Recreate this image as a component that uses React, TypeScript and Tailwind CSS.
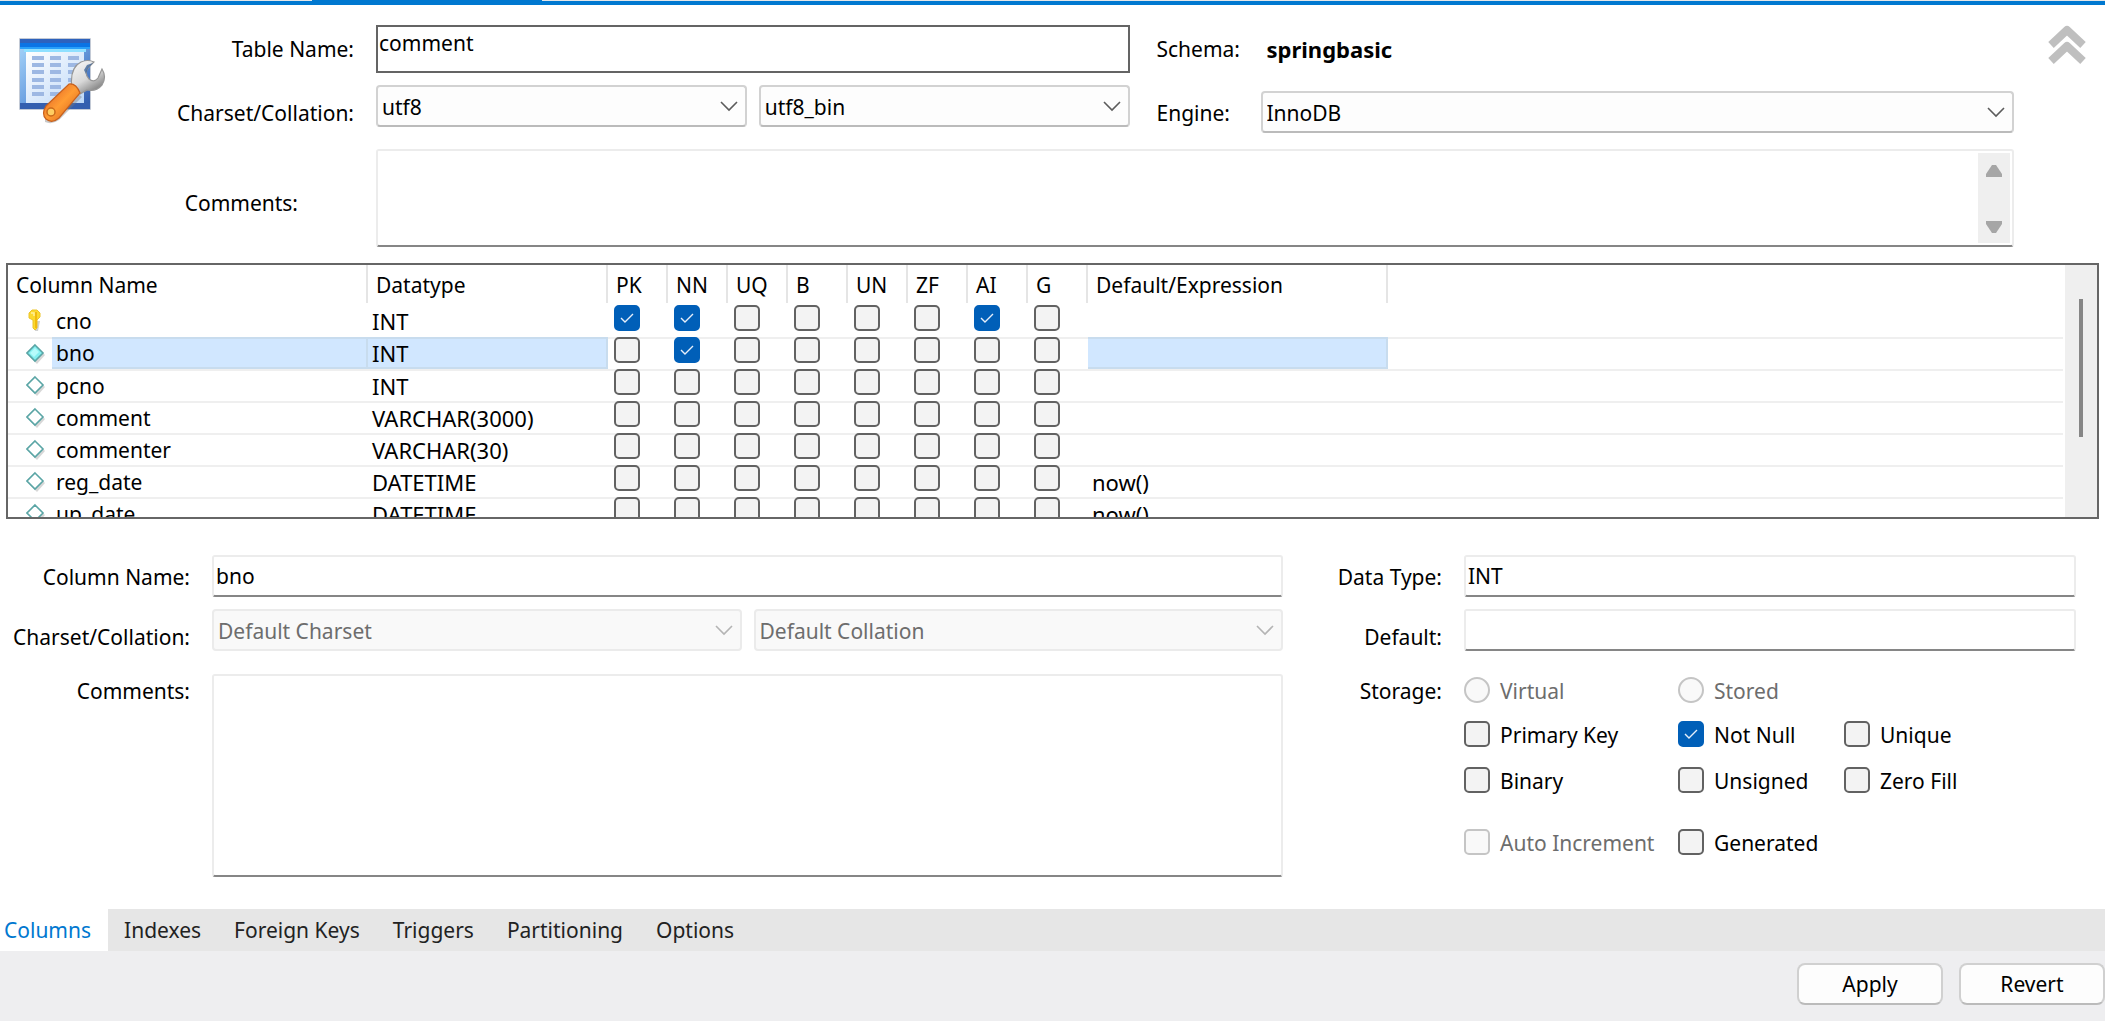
import React, { useId, useState } from 'react';
import clsx from 'clsx';

type Flag = 'PK' | 'NN' | 'UQ' | 'B' | 'UN' | 'ZF' | 'AI' | 'G';

interface Column {
  name: string;
  type: string;
  flags: Flag[];
  defaultValue?: string;
}

const FLAGS: Flag[] = ['PK', 'NN', 'UQ', 'B', 'UN', 'ZF', 'AI', 'G'];

const INITIAL_COLUMNS: Column[] = [
  { name: 'cno', type: 'INT', flags: ['PK', 'NN', 'AI'] },
  { name: 'bno', type: 'INT', flags: ['NN'] },
  { name: 'pcno', type: 'INT', flags: [] },
  { name: 'comment', type: 'VARCHAR(3000)', flags: [] },
  { name: 'commenter', type: 'VARCHAR(30)', flags: [] },
  { name: 'reg_date', type: 'DATETIME', flags: [], defaultValue: 'now()' },
  { name: 'up_date', type: 'DATETIME', flags: [], defaultValue: 'now()' },
];

const TABS = ['Columns', 'Indexes', 'Foreign Keys', 'Triggers', 'Partitioning', 'Options'];

const FIELD =
  'w-full min-w-0 rounded-[3px] border-2 border-[#ececec] border-b-[#868686] bg-white px-0.5 outline-none';

const TableIcon = () => (
  <svg width="88" height="88" viewBox="0 0 88 88" aria-hidden="true">
    <defs>
      <linearGradient id="frame" x1="0" y1="0" x2="1" y2="1">
        <stop offset="0" stopColor="#a9d7fb" />
        <stop offset="0.5" stopColor="#6a9fe0" />
        <stop offset="1" stopColor="#2a55a8" />
      </linearGradient>
      <linearGradient id="sheet" x1="0" y1="0" x2="1" y2="1">
        <stop offset="0" stopColor="#ffffff" />
        <stop offset="1" stopColor="#bcd8f8" />
      </linearGradient>
      <linearGradient id="steel" x1="0" y1="0" x2="0.6" y2="1">
        <stop offset="0" stopColor="#fafafa" />
        <stop offset="0.6" stopColor="#d8d8d8" />
        <stop offset="1" stopColor="#808080" />
      </linearGradient>
      <linearGradient id="handle" x1="0" y1="0" x2="1" y2="1">
        <stop offset="0.2" stopColor="#e8702a" />
        <stop offset="0.5" stopColor="#ff9c33" />
        <stop offset="0.9" stopColor="#d9651c" />
      </linearGradient>
    </defs>
    <rect x="1" y="1" width="72" height="72" rx="1" fill="#c3cad6" />
    <rect x="2" y="2" width="70" height="70" fill="url(#frame)" />
    <rect x="2" y="2" width="70" height="4" fill="#2d62bd" />
    <rect x="2" y="6" width="70" height="5" fill="#0b74e5" />
    <rect x="2" y="10" width="70" height="2" fill="#28a0fa" />
    <rect x="6" y="12" width="62" height="3" fill="#8fe0ff" />
    <rect x="2" y="66" width="70" height="6" fill="#345faf" />
    <rect x="8" y="15" width="58" height="51" fill="url(#sheet)" />
    {[19, 26, 33, 41, 48, 55].map((y) => (
      <g key={y} fill="#9db8e3">
        <rect x="14" y={y} width="12" height="4" />
        <rect x="32" y={y} width="11" height="4" />
        <rect x="50" y={y} width="11" height="4" />
      </g>
    ))}
    <path
      d="M27 80 52 50 64 60 41 83Q34 88 27 85Z"
      fill="#777777"
      opacity="0.4"
    />
    <path
      d="M54 52Q51 31 63 25Q70 22 76 25L70 31Q66 37 71 42Q76 46 80 41L84 32Q89 40 84 48Q78 55 69 53L62 57Z"
      fill="url(#steel)"
      stroke="#969696"
      strokeWidth="1.2"
    />
    <path d="M68 37 70 31 75 26 69 28 66 33Z" fill="#3e6598" opacity="0.8" />
    <path
      d="M51 47Q58 46 62 56L41 81Q34 87 28 82Q23 77 28 69Z"
      fill="url(#handle)"
      stroke="#c8601c"
      strokeWidth="1.2"
    />
    <circle cx="33" cy="75" r="4" fill="#ffce62" stroke="#c9691b" strokeWidth="1.5" />
  </svg>
);

const KeyIcon = () => (
  <svg width="20" height="24" viewBox="0 0 20 24" aria-hidden="true">
    <path d="M8 12H14L12 22H9Z" fill="#9a9a9a" opacity="0.45" />
    <path
      d="M6 1H11L14 4V8L11 11V19L9 21L7 19V11L3 9V4Z"
      fill="#fbd92e"
      stroke="#ecc42a"
      strokeWidth="1"
    />
    <path d="M10 3V19" stroke="#f0b90f" strokeWidth="2" />
    <path d="M5 4H8V7" fill="none" stroke="#fff09a" strokeWidth="1.5" />
  </svg>
);

const DiamondIcon = ({ filled }: { filled: boolean }) => (
  <svg width="20" height="22" viewBox="0 0 20 22" aria-hidden="true">
    <path d="M11 4 19 12 11 21 4 14Z" fill="#8c8c8c" opacity="0.35" />
    <path
      d="M9 2 17 10 9 18 1 10Z"
      fill={filled ? '#84eff0' : '#ffffff'}
      stroke="#5aa5a5"
      strokeWidth="1.6"
    />
    {filled && <path d="M9 5 13 9 8 14 4 10Z" fill="#b6fbfb" />}
  </svg>
);

interface CheckBoxProps {
  checked: boolean;
  onChange?: () => void;
  label?: string;
  id?: string;
  disabled?: boolean;
}

const CheckBox = ({ checked, onChange, label, id, disabled }: CheckBoxProps) => (
  <span className="relative block size-[26px] shrink-0">
    <input
      id={id}
      type="checkbox"
      aria-label={label}
      checked={checked}
      disabled={disabled}
      onChange={onChange}
      className="block size-[26px] appearance-none rounded-[5px] border-2 border-[#626262] bg-[#f3f3f3] checked:border-[#005fb8] checked:bg-[#005fb8] disabled:border-[#c5c5c5] disabled:bg-[#f9f9f9]"
    />
    {checked && (
      <svg className="pointer-events-none absolute inset-0" width="26" height="26" viewBox="0 0 26 26" aria-hidden="true">
        <path d="M7 13 11 17 19 9" fill="none" stroke="#e6effa" strokeWidth="1.4" />
      </svg>
    )}
  </span>
);

interface DropDownProps {
  id?: string;
  label?: string;
  value: string;
  disabled?: boolean;
  className?: string;
}

const DropDown = ({ id, label, value, disabled, className }: DropDownProps) => (
  <div className={clsx('relative h-[42px] min-w-0', className)}>
    <select
      id={id}
      aria-label={label}
      defaultValue={value}
      disabled={disabled}
      className="h-full w-full appearance-none rounded-[4px] border-2 border-[#d2d2d2] border-b-[#bbbbbb] bg-[#fdfdfd] pt-0.5 pl-1 outline-none disabled:border-[#ebebeb] disabled:bg-[#f9f9f9] disabled:text-[#6d6d6d] disabled:opacity-100"
    >
      <option>{value}</option>
    </select>
    <svg
      className={clsx('pointer-events-none absolute top-4 right-[9px]', disabled ? 'text-[#b4b4b4]' : 'text-[#5c5c5c]')}
      width="18"
      height="12"
      viewBox="0 0 18 12"
      aria-hidden="true"
    >
      <path d="M1 1 9 9 17 1" fill="none" stroke="currentColor" strokeWidth="1.6" />
    </svg>
  </div>
);

interface OptionProps {
  type?: 'checkbox' | 'radio';
  label: string;
  checked?: boolean;
  disabled?: boolean;
}

const Option = ({ type = 'checkbox', label, checked = false, disabled }: OptionProps) => {
  const id = useId();
  const [on, setOn] = useState(checked);

  return (
    <div className="flex h-[26px] items-center gap-2.5">
      {type === 'radio' ? (
        <input
          id={id}
          type="radio"
          name="storage"
          disabled={disabled}
          className="size-[26px] shrink-0 appearance-none rounded-full border-2 border-[#c5c5c5] bg-[#f9f9f9]"
        />
      ) : (
        <CheckBox id={id} checked={on} disabled={disabled} onChange={() => setOn(!on)} />
      )}
      <label htmlFor={id} className={clsx('whitespace-nowrap pt-0.5', disabled && 'text-[#6d6d6d]')}>
        {label}
      </label>
    </div>
  );
};

const TableHeader = () => (
  <header className="flex pt-5 pr-[19px] pl-[18px]">
    <div className="w-[86px] shrink-0 pt-3">
      <TableIcon />
    </div>

    <div className="grid flex-1 grid-cols-[272px_minmax(0,1fr)_131px_minmax(0,1fr)]">
      <label htmlFor="table-name" className="self-center pr-[22px] text-right">Table Name:</label>
      <input
        id="table-name"
        defaultValue="comment"
        className="h-12 w-full min-w-0 border-2 border-[#646464] bg-white pb-3 pl-px outline-none"
      />
      <span className="self-center pl-[27px]">Schema:</span>
      <strong className="self-center pl-1.5 text-[22px]">springbasic</strong>

      <label htmlFor="charset" className="mt-3 self-end pr-[22px] pb-1.5 text-right">Charset/Collation:</label>
      <div className="mt-3 grid grid-cols-2 gap-3">
        <DropDown id="charset" value="utf8" />
        <DropDown label="Collation" value="utf8_bin" />
      </div>
      <label htmlFor="engine" className="mt-3 self-end pb-1.5 pl-[27px]">Engine:</label>
      <DropDown id="engine" value="InnoDB" className="mt-[18px]" />

      <label htmlFor="table-comments" className="mt-4 self-center pt-2.5 pr-[78px] text-right">Comments:</label>
      <div className="col-span-3 mt-4 flex h-[98px] rounded-[3px] border-2 border-[#ececec] border-b-[#868686] p-0.5">
        <textarea id="table-comments" className="min-w-0 flex-1 resize-none outline-none" />
        <div className="flex w-8 flex-col items-center justify-between bg-[#efefef] pt-3 pb-2.5">
          <svg width="16" height="12" viewBox="0 0 16 12" aria-hidden="true">
            <path d="M6 0H10L16 9V12H0V9Z" fill="#a6a6a6" />
          </svg>
          <svg width="16" height="12" viewBox="0 0 16 12" aria-hidden="true">
            <path d="M6 12H10L16 3V0H0V3Z" fill="#a6a6a6" />
          </svg>
        </div>
      </div>
    </div>

    <button type="button" aria-label="Collapse" className="ml-[34px] self-start">
      <svg width="38" height="40" viewBox="0 0 38 40" aria-hidden="true">
        <path
          d="M3 20 19 5 35 20M3 36 19 21 35 36"
          fill="none"
          stroke="#bfbfbf"
          strokeWidth="8"
          strokeLinejoin="round"
        />
      </svg>
    </button>
  </header>
);

const HEAD_CELL = 'p-0 text-left align-top font-normal';

const ColumnGrid = () => {
  const [columns, setColumns] = useState(INITIAL_COLUMNS);
  const [selected, setSelected] = useState('bno');

  const toggleFlag = (name: string, flag: Flag) => {
    setColumns(columns.map((col) => {
      if (col.name !== name) return col;
      const flags = col.flags.includes(flag) ? col.flags.filter((f) => f !== flag) : [...col.flags, flag];
      return { ...col, flags };
    }));
  };

  return (
    <section className="mx-1.5 mt-4 flex h-64 overflow-hidden border-2 border-[#666666]">
      <div className="min-w-0 flex-1 pr-0.5">
        <table className="w-full table-fixed border-separate border-spacing-0">
          <colgroup>
            <col className="w-[360px]" />
            <col className="w-[240px]" />
            {FLAGS.map((flag) => <col key={flag} className="w-[60px]" />)}
            <col className="w-[300px]" />
            <col />
          </colgroup>
          <thead>
            <tr className="h-10">
              {['Column Name', 'Datatype', ...FLAGS, 'Default/Expression'].map((title) => (
                <th key={title} className={HEAD_CELL}>
                  <div className="h-[38px] border-r-2 border-[#e5e5e5] pl-2 leading-10">{title}</div>
                </th>
              ))}
              <td />
            </tr>
          </thead>
          <tbody>
            {columns.map((col, index) => {
              const isSelected = col.name === selected;
              const line = index > 0 && 'border-t-2 border-[#efefef]';
              const cell = clsx(
                'flex h-8 items-center pl-1',
                isSelected ? 'border-2 border-l-0 border-[#c8dcee] bg-[#d1e7ff]' : line,
              );

              return (
                <tr key={col.name} onClick={() => setSelected(col.name)}>
                  <td className="p-0">
                    <div className="flex">
                      <div className={clsx('flex h-8 w-11 shrink-0 items-center pl-[18px]', line)}>
                        {col.flags.includes('PK') ? <KeyIcon /> : <DiamondIcon filled={col.flags.includes('NN')} />}
                      </div>
                      <div className={clsx(cell, 'flex-1')}>{col.name}</div>
                    </div>
                  </td>
                  <td className="p-0 text-[22px]"><div className={cell}>{col.type}</div></td>
                  {FLAGS.map((flag) => (
                    <td key={flag} className="p-0">
                      <div className={clsx('h-8 pl-1.5', line)}>
                        <div className={clsx(index > 0 && '-mt-0.5')}>
                          <CheckBox
                            label={`${col.name} ${flag}`}
                            checked={col.flags.includes(flag)}
                            onChange={() => toggleFlag(col.name, flag)}
                          />
                        </div>
                      </div>
                    </td>
                  ))}
                  <td className="p-0 text-[22px]"><div className={cell}>{col.defaultValue}</div></td>
                  <td className="p-0"><div className={clsx('h-8', line)} /></td>
                </tr>
              );
            })}
          </tbody>
        </table>
      </div>
      <div className="w-8 shrink-0 bg-[#efefef] pt-[34px] pl-3.5">
        <div className="h-[138px] w-1 bg-[#868686]" />
      </div>
    </section>
  );
};

const ColumnDetails = () => (
  <section className="grid grid-cols-[212px_minmax(0,7fr)_181px_minmax(0,4fr)] pt-9 pr-[29px] pb-8">
    <label htmlFor="column-name" className="self-center pt-0.5 pr-[22px] text-right">Column Name:</label>
    <input id="column-name" defaultValue="bno" className={clsx(FIELD, 'h-[42px]')} />
    <label htmlFor="data-type" className="self-center pt-0.5 pr-[22px] text-right">Data Type:</label>
    <input id="data-type" defaultValue="INT" className={clsx(FIELD, 'h-[42px]')} />

    <label htmlFor="column-charset" className="self-end pr-[22px] text-right">Charset/Collation:</label>
    <div className="mt-3 grid grid-cols-2 gap-3">
      <DropDown id="column-charset" value="Default Charset" disabled />
      <DropDown label="Column collation" value="Default Collation" disabled />
    </div>
    <label htmlFor="default-value" className="self-end pr-[22px] text-right">Default:</label>
    <input id="default-value" className={clsx(FIELD, 'mt-3 h-[42px]')} />

    <label htmlFor="column-comments" className="mt-[26px] pr-[22px] text-right">Comments:</label>
    <textarea id="column-comments" className={clsx(FIELD, 'mt-[23px] block h-[203px] resize-none')} />
    <span className="mt-[26px] pr-[22px] text-right">Storage:</span>
    <div className="mt-[26px] grid grid-cols-[214px_166px_minmax(0,1fr)] grid-rows-[44px_46px_62px_26px] content-start">
      <Option type="radio" label="Virtual" disabled />
      <Option type="radio" label="Stored" disabled />
      <span />
      <Option label="Primary Key" />
      <Option label="Not Null" checked />
      <Option label="Unique" />
      <Option label="Binary" />
      <Option label="Unsigned" />
      <Option label="Zero Fill" />
      <Option label="Auto Increment" disabled />
      <Option label="Generated" />
    </div>
  </section>
);

const App = () => {
  const [tab, setTab] = useState('Columns');

  return (
    <div className="flex min-h-screen flex-col bg-white font-['Noto_Sans','Open_Sans',sans-serif] text-[21px] leading-7 text-black">
      {/* Bottom edge of the editor tab strip */}
      <div className="flex h-px bg-[#e4e6e8]">
        <div className="ml-[312px] w-[230px] bg-[#0078d0]" />
      </div>
      <div className="h-1 bg-[#0078d0]" />

      <TableHeader />
      <ColumnGrid />
      <ColumnDetails />

      <nav className="flex h-[42px] bg-[#e6e6e6] text-[#222222]">
        {TABS.map((name) => (
          <button
            key={name}
            type="button"
            onClick={() => setTab(name)}
            className={clsx('h-full pr-[17px]', name === tab ? 'bg-white pl-1 text-[#0078d0]' : 'pl-4')}
          >
            {name}
          </button>
        ))}
      </nav>

      <footer className="flex flex-1 items-start justify-end gap-4 bg-[#eeeef0] pt-3">
        {['Apply', 'Revert'].map((name) => (
          <button
            key={name}
            type="button"
            className="h-[42px] w-[146px] rounded-[8px] border-2 border-[#d0d0d0] border-b-[#bbbbbb] bg-[#fdfdfd]"
          >
            {name}
          </button>
        ))}
      </footer>
    </div>
  );
};

export default App;
